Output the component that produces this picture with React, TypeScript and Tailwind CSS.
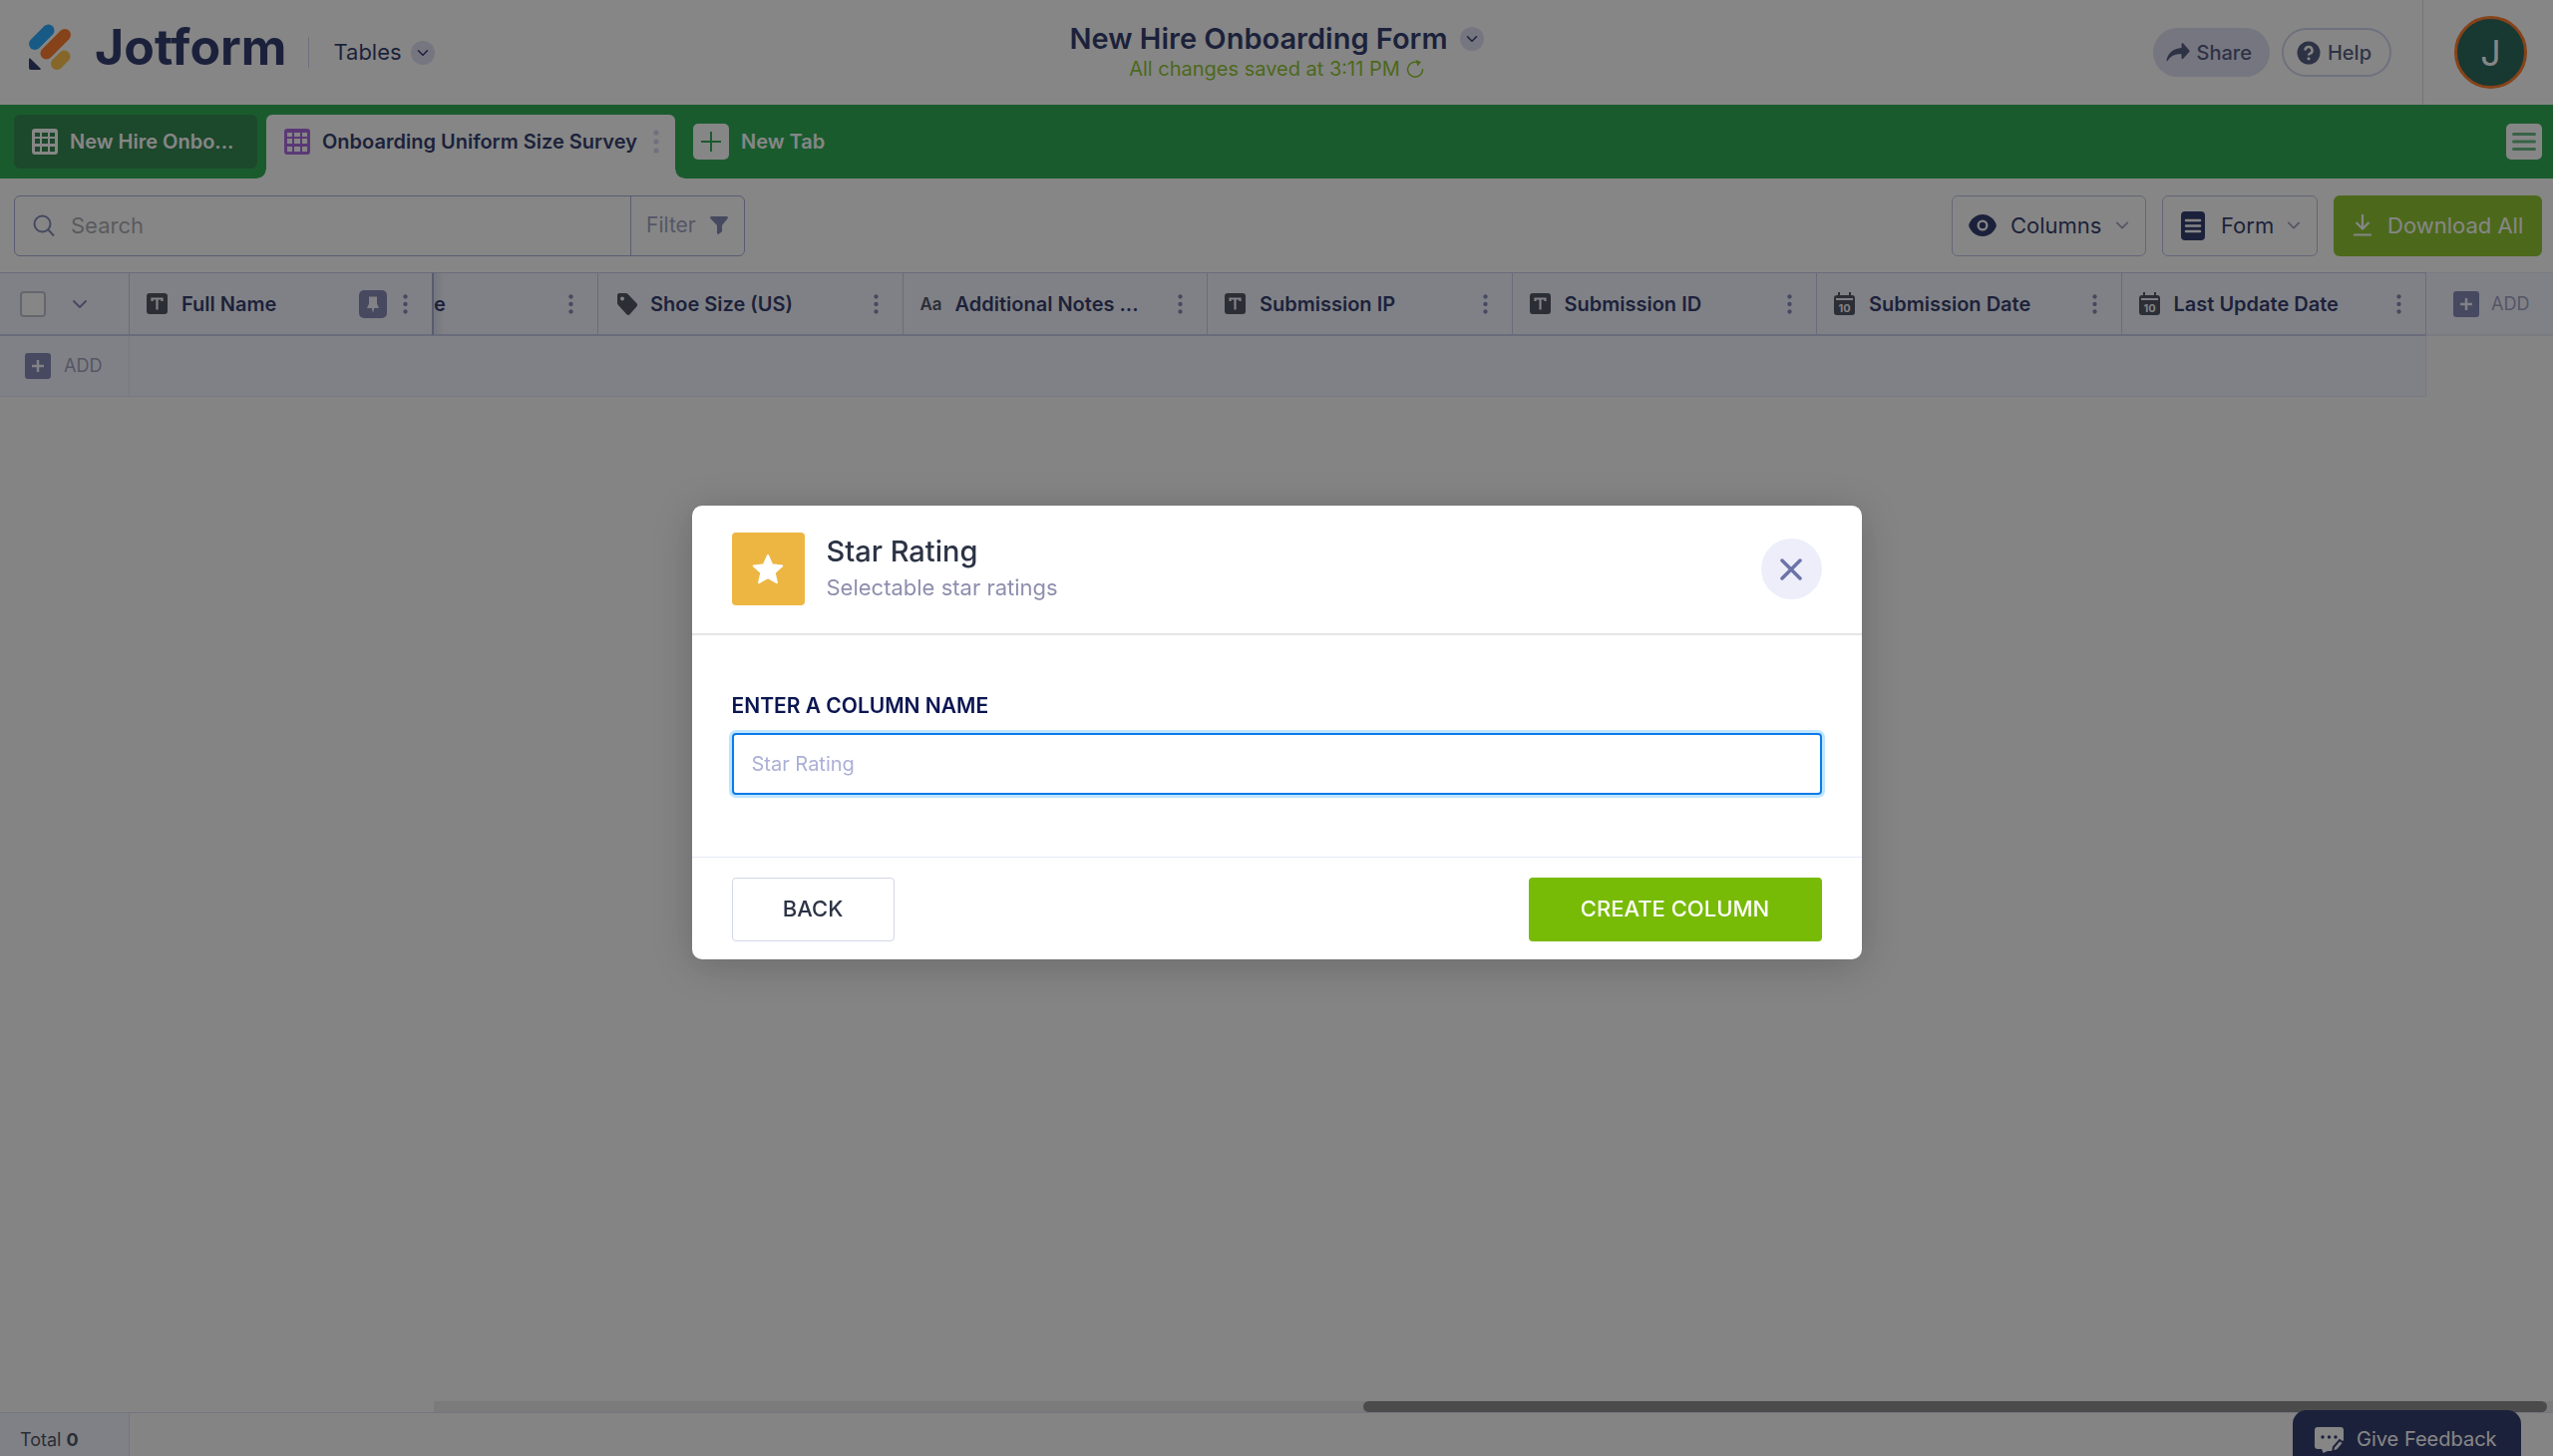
import React, { useState } from 'react';

type ColumnType = 'text' | 'tag' | 'longText' | 'date';

interface Column {
  id: string;
  label: string;
  type: ColumnType;
}

const columns: Column[] = [
  { id: 'shoe', label: 'Shoe Size (US)', type: 'tag' },
  { id: 'notes', label: 'Additional Notes ...', type: 'longText' },
  { id: 'ip', label: 'Submission IP', type: 'text' },
  { id: 'sid', label: 'Submission ID', type: 'text' },
  { id: 'created', label: 'Submission Date', type: 'date' },
  { id: 'updated', label: 'Last Update Date', type: 'date' },
];

const Chevron: React.FC<{ className?: string }> = ({ className }) => (
  <svg viewBox="0 0 16 16" className={className} fill="none" stroke="currentColor" strokeWidth="2" strokeLinecap="round" strokeLinejoin="round" aria-hidden="true">
    <path d="M2 5l6 6 6-6" />
  </svg>
);

const Dots: React.FC<{ className?: string }> = ({ className }) => (
  <svg viewBox="0 0 6 26" className={className} fill="currentColor" aria-hidden="true">
    <circle cx="3" cy="4" r="2.6" />
    <circle cx="3" cy="13" r="2.6" />
    <circle cx="3" cy="22" r="2.6" />
  </svg>
);

const GridIcon: React.FC<{ className?: string }> = ({ className }) => (
  <svg viewBox="0 0 26 26" className={className} fill="currentColor" aria-hidden="true">
    <path
      fillRule="evenodd"
      d="M3 0h20a3 3 0 0 1 3 3v20a3 3 0 0 1-3 3H3a3 3 0 0 1-3-3V3a3 3 0 0 1 3-3ZM3 4v4h5V4ZM10 4v4h6V4ZM18 4v4h5V4ZM3 10v5h5v-5ZM10 10v5h6v-5ZM18 10v5h5v-5ZM3 18v5h5v-5ZM10 18v5h6v-5ZM18 18v5h5v-5Z"
    />
  </svg>
);

const LogoMark = () => (
  <svg viewBox="29 24 42 46" className="h-[46px] w-[42px]" fill="none" strokeWidth="12" strokeLinecap="round" aria-hidden="true">
    <path d="M35 44L48.500 30.500" stroke="#0099ff" />
    <path d="M46.500 53.500L65 35" stroke="#ff6100" />
    <path d="M57 64L64.500 56.500" stroke="#ffb629" />
    <path d="M29 59.500c0-1 1-1.300 1.700-.6l9.800 9.600c.8.700.3 1.500-.6 1.500H31a2 2 0 0 1-2-2Z" fill="#0a1551" />
  </svg>
);

const PlusBox = () => (
  <svg viewBox="0 0 26 26" className="size-[26px] text-[#6c73a8]" aria-hidden="true">
    <rect width="26" height="26" rx="3" fill="currentColor" />
    <path d="M13 7v12M7 13h12" stroke="#f3f3fe" strokeWidth="2.500" />
  </svg>
);

const TypeIcon: React.FC<{ type: ColumnType }> = ({ type }) => {
  if (type === 'longText') {
    return <span className="w-[21px] text-[17px] leading-6 font-semibold">Aa</span>;
  }
  if (type === 'tag') {
    return (
      <svg viewBox="0 0 24 24" className="size-6 shrink-0" fill="currentColor" aria-hidden="true">
        <path fillRule="evenodd" d="M4 1h6.500c.8 0 1.500.3 2 .8l9 9.500c.8.900.8 2.200 0 3l-7 7.900c-.9.900-2.200.9-3.100 0l-8.600-9.500c-.5-.5-.8-1.200-.8-2V3a2 2 0 0 1 2-2ZM7 4.500a2 2 0 1 0 0 4 2 2 0 0 0 0-4Z" />
      </svg>
    );
  }
  if (type === 'date') {
    return (
      <svg viewBox="0 0 21 23" className="h-[23px] w-[21px] shrink-0" fill="currentColor" aria-hidden="true">
        <path d="M4 0h2v3h9V0h2v3h1a3 3 0 0 1 3 3v2h-2V6H2v2H0V6a3 3 0 0 1 3-3h1Z" />
        <path d="M0 8h21v12a3 3 0 0 1-3 3H3a3 3 0 0 1-3-3Z" />
        <text x="10.500" y="20" textAnchor="middle" fontSize="11" fontWeight="700" fill="#f3f3fe">
          10
        </text>
      </svg>
    );
  }
  return (
    <svg viewBox="0 0 21 21" className="size-[21px] shrink-0" aria-hidden="true">
      <rect width="21" height="21" rx="3" fill="currentColor" />
      <path d="M5.500 8V5.500h10V8M10.500 5.500v11" stroke="#f3f3fe" strokeWidth="2.200" fill="none" />
    </svg>
  );
};

const TopBar = () => (
  <header className="grid h-[105px] grid-cols-[1fr_auto_1fr] items-center bg-white">
    <div className="flex items-center pl-[29px]">
      <a href="#home" className="flex items-center gap-6 pb-3 text-[50px] leading-[50px] font-bold">
        <LogoMark />
        Jotform
      </a>
      <span className="ml-[22px] h-[31px] w-px bg-[#c8ceed]" />
      <button className="ml-6 flex items-center gap-[9px] text-[22px]">
        Tables
        <span className="flex size-6 items-center justify-center rounded-full bg-[#d9d9f3]">
          <Chevron className="size-3" />
        </span>
      </button>
    </div>

    <div className="flex flex-col items-center">
      <button className="flex items-center gap-3">
        <h1 className="text-[29px] leading-9 font-semibold">New Hire Onboarding Form</h1>
        <span className="flex size-6 items-center justify-center rounded-full bg-[#d9d9f3]">
          <Chevron className="size-3" />
        </span>
      </button>
      <p className="flex items-center gap-[6px] pb-1 text-[20px] leading-6 text-[#78bb07]">
        All changes saved at 3:11 PM
        <svg viewBox="0 0 18 18" className="size-[18px]" fill="none" stroke="currentColor" strokeWidth="1.500" aria-hidden="true">
          <path d="M16.500 9A7.500 7.500 0 1 1 11 2.500" />
          <path d="M9.500 0l5.500 2-3.500 4.500Z" fill="currentColor" stroke="none" />
        </svg>
      </p>
    </div>

    <div className="flex items-center justify-end self-stretch">
      <button className="flex h-[49px] items-center gap-[7px] rounded-full bg-[#d9d9f3] pr-[18px] pl-[13px] text-[20px] font-medium text-[#343c6a]">
        <svg viewBox="0 0 24 20" className="h-5 w-6" fill="currentColor" aria-hidden="true">
          <path d="M15.500 1.200c0-.9 1-1.400 1.700-.8l5.900 6.800c.6.600.6 1.500 0 2.100l-5.900 6.500c-.6.700-1.700.2-1.700-.7v-3.800C8 11 4.500 13.500 1.800 17.800c-.5.800-1.500.5-1.300-.5C2 10.500 7 5.500 15.500 5Z" />
        </svg>
        Share
      </button>
      <button className="ml-3 flex h-[49px] items-center gap-[7px] rounded-full border-2 border-[#c8ceed] pr-[18px] pl-[13px] text-[20px] font-medium text-[#343c6a]">
        <svg viewBox="0 0 24 24" className="size-6" aria-hidden="true">
          <circle cx="12" cy="12" r="11.500" fill="currentColor" />
          <path d="M8.500 9.500a3.500 3.500 0 1 1 5 3.200c-1 .5-1.500.9-1.500 1.800" fill="none" stroke="white" strokeWidth="2.500" />
          <circle cx="12" cy="17.800" r="1.600" fill="white" />
        </svg>
        Help
      </button>
      <span className="ml-[31px] w-px self-stretch bg-[#d5d7e2]" />
      <button className="mr-[26px] ml-[31px] flex size-[73px] items-center justify-center rounded-full border-[3px] border-[#ff6100] bg-[#004a3d] text-[36px] text-white">
        J
      </button>
    </div>
  </header>
);

const TabBar = () => (
  <nav className="flex h-[74px] items-center bg-[#069c34] pr-[11px] pl-[14px] text-[20px] font-semibold text-white">
    <button className="flex h-[54px] w-[244px] items-center gap-3 rounded-md bg-[#0b6f2e] px-[18px]">
      <GridIcon className="size-[26px]" />
      New Hire Onbo...
    </button>
    <button className="relative ml-[9px] flex h-[64px] w-[410px] items-center gap-3 self-end rounded-t-md bg-white pr-4 pb-[10px] pl-[18px] text-[#0a1551] before:absolute before:bottom-0 before:-left-[9px] before:size-[9px] before:bg-[radial-gradient(circle_at_0_0,transparent_8px,white_9px)] after:absolute after:-right-[9px] after:bottom-0 after:size-[9px] after:bg-[radial-gradient(circle_at_100%_0,transparent_8px,white_9px)]">
      <GridIcon className="size-[26px] text-[#9a4ddb]" />
      Onboarding Uniform Size Survey
      <Dots className="ml-auto h-[26px] w-[6px] text-[#c8ceed]" />
    </button>
    <button className="ml-[18px] flex items-center gap-3">
      <svg viewBox="0 0 36 36" className="size-9" aria-hidden="true">
        <rect width="36" height="36" rx="5" fill="white" />
        <path d="M18 8v20M8 18h20" stroke="#069c34" strokeWidth="2" />
      </svg>
      New Tab
    </button>
    <button aria-label="Menu" className="ml-auto">
      <svg viewBox="0 0 36 36" className="size-9" aria-hidden="true">
        <rect width="36" height="36" rx="5" fill="white" />
        <path d="M7.500 10.500h21M7.500 18h21M7.500 25.500h21" stroke="#4caf6e" strokeWidth="3" strokeLinecap="round" />
      </svg>
    </button>
  </nav>
);

const Toolbar = () => {
  const [search, setSearch] = useState('');

  return (
    <div className="flex h-[94px] items-center gap-4 bg-white pr-[11px] pl-[14px] text-[22px]">
      <div className="flex h-[61px] w-[733px] items-stretch rounded-md border border-[#979dcc]">
        <label htmlFor="search" className="flex items-center pr-4 pl-[18px]">
          <svg viewBox="0 0 22 22" role="img" aria-label="Search" className="size-[22px] text-[#6c73a8]" fill="none" stroke="currentColor" strokeWidth="2">
            <circle cx="9.500" cy="9.500" r="8" />
            <path d="M15.500 15.500l5.500 6" />
          </svg>
        </label>
        <input
          id="search"
          value={search}
          onChange={(e) => setSearch(e.target.value)}
          placeholder="Search"
          className="min-w-0 flex-1 bg-transparent outline-none placeholder:text-[#9a9ba3]"
        />
        <button className="flex w-[114px] items-center justify-between border-l border-[#979dcc] pr-4 pl-[15px] text-[21px] text-[#8d91b5]">
          Filter
          <svg viewBox="0 0 18 18" className="size-[18px] text-[#6c73a8]" fill="currentColor" aria-hidden="true">
            <path d="M1.500 0h15c1.300 0 1.800 1.300 1 2.300L12 9v5.500c0 .5-.2.900-.6 1.200l-2.800 2c-.7.500-1.600 0-1.600-.9V9L.5 2.300C-.3 1.300.2 0 1.500 0Z" />
          </svg>
        </button>
      </div>

      <button className="ml-auto flex h-[61px] w-[195px] items-center rounded-md border border-[#aeb4de] pl-4">
        <svg viewBox="0 0 28 22" className="h-[22px] w-7" aria-hidden="true">
          <path d="M14 0C7.500 0 2.500 4.500.4 9.800c-.3.800-.3 1.600 0 2.400C2.500 17.500 7.500 22 14 22s11.500-4.500 13.600-9.800c.3-.8.3-1.600 0-2.400C25.500 4.500 20.500 0 14 0Z" fill="currentColor" />
          <circle cx="14" cy="11" r="5.500" fill="white" />
          <circle cx="14" cy="11" r="3.200" fill="currentColor" />
        </svg>
        <span className="ml-[14px]">Columns</span>
        <Chevron className="mr-4 ml-auto size-[14px] text-[#8d91b5]" />
      </button>
      <button className="flex h-[61px] w-[156px] items-center rounded-md border border-[#aeb4de] pl-[18px]">
        <svg viewBox="0 0 24 29" className="h-[29px] w-6" aria-hidden="true">
          <rect width="24" height="29" rx="4" fill="currentColor" />
          <path d="M5 9h14M5 14.500h14M5 20h14" stroke="white" strokeWidth="2.500" strokeLinecap="round" />
        </svg>
        <span className="ml-4">Form</span>
        <Chevron className="mr-4 ml-auto size-[14px] text-[#8d91b5]" />
      </button>
      <button className="flex h-[61px] w-[209px] items-center gap-4 rounded-md bg-[#78bb07] pl-5 text-white">
        <svg viewBox="0 0 18 22" className="h-[22px] w-[18px] shrink-0" fill="none" stroke="currentColor" strokeWidth="2.200" aria-hidden="true">
          <path d="M9 0v14M2.500 8L9 14.500 15.500 8M0 20.500h18" />
        </svg>
        Download All
      </button>
    </div>
  );
};

const DataTable = () => (
  <table className="w-full table-fixed border-separate border-spacing-0 text-[20px] leading-6">
    <colgroup>
      <col className="w-[130px]" />
      <col className="w-[305px]" />
      <col className="w-[165px]" />
      {columns.map((column) => (
        <col key={column.id} />
      ))}
      <col className="w-[127px]" />
    </colgroup>
    <thead>
      <tr className="bg-[#f2f4fe] text-left text-[#0a1551]">
        <th className="h-[64px] border-t border-r border-b-2 border-[#bcc2e6] p-0 font-semibold">
          <div className="flex items-center gap-[26px] pl-5">
            <input type="checkbox" aria-label="Select all rows" className="size-[26px] appearance-none rounded border-2 border-[#b3b5c6] bg-white" />
            <Chevron className="size-4 text-[#6c73a8]" />
          </div>
        </th>
        <th className="border-t border-r-2 border-b-2 border-[#bcc2e6] border-r-[#979dcc] p-0 font-semibold">
          <div className="flex items-center pr-6 pl-[17px]">
            <span className="text-[#2c3345]">
              <TypeIcon type="text" />
            </span>
            <span className="ml-[14px]">Full Name</span>
            <svg viewBox="0 0 28 28" className="ml-auto size-7" aria-hidden="true">
              <rect width="28" height="28" rx="5" fill="#6c73a8" />
              <path d="M10 6.500h8v7l2 4.500h-4.800L14 23l-1.200-5H8l2-4.500Z" fill="#f3f3fe" />
            </svg>
            <Dots className="ml-4 h-[22px] w-[5px] text-[#6c73a8]" />
          </div>
        </th>
        <th className="border-t border-r border-b-2 border-[#bcc2e6] p-0 font-semibold shadow-[inset_12px_0_10px_-8px_#d0d4ea]">
          <div className="flex items-center justify-between pr-6">
            <span>e</span>
            <Dots className="h-[22px] w-[5px] text-[#6c73a8]" />
          </div>
        </th>
        {columns.map((column) => (
          <th key={column.id} className="border-t border-r border-b-2 border-[#bcc2e6] p-0 font-semibold">
            <div className="flex items-center pr-6 pl-[17px]">
              <span className="flex w-[35px] shrink-0 text-[#2c3345]">
                <TypeIcon type={column.type} />
              </span>
              <span className="truncate">{column.label}</span>
              <Dots className="ml-auto h-[22px] w-[5px] shrink-0 text-[#6c73a8]" />
            </div>
          </th>
        ))}
        <th className="border-t border-b-2 border-[#e3e5f5] p-0 font-normal">
          <button className="flex items-center gap-3 pl-[27px] text-[18px] text-[#8d91b5]">
            <PlusBox />
            ADD
          </button>
        </th>
      </tr>
    </thead>
    <tbody>
      <tr>
        <td className="h-[61px] border-r border-b border-[#dfe2f3] bg-[#f2f4fe] p-0">
          <button className="flex items-center gap-[13px] pl-[25px] text-[18px] text-[#8d91b5]">
            <PlusBox />
            ADD
          </button>
        </td>
        <td colSpan={8} className="border-r border-b border-[#dfe2f3] bg-[#f2f4fe] p-0" />
        <td className="p-0" />
      </tr>
    </tbody>
  </table>
);

const BottomBar = () => (
  <footer className="mt-auto">
    <div className="ml-[435px] flex h-[11px] justify-end bg-[#e6e6e6] pr-[6px]">
      <div className="w-[56%] rounded-full bg-[#777777]" />
    </div>
    <div className="flex h-[44px] border-t border-[#d5d8ee]">
      <div className="w-[130px] border-r border-[#d5d8ee] bg-[#f2f4fe] pt-[15px] pl-5 text-[18px] leading-6 text-[#2c3345]">
        Total <b>0</b>
      </div>
    </div>
    <button className="fixed right-8 bottom-0 flex h-[46px] w-[229px] items-center gap-[12px] rounded-t-[14px] bg-[#0a1551] pt-3 pl-[22px] text-[20px] text-white">
      <svg viewBox="0 0 30 27" className="h-[27px] w-[30px] shrink-0" aria-hidden="true">
        <path d="M3 1h23a3 3 0 0 1 3 3v10l-9 11h-7l-4.500 2-1.500-4H3a3 3 0 0 1-3-3V4a3 3 0 0 1 3-3Z" fill="white" />
        <circle cx="8" cy="11" r="1.700" fill="#0a1551" />
        <circle cx="14.500" cy="11" r="1.700" fill="#0a1551" />
        <circle cx="21" cy="11" r="1.700" fill="#0a1551" />
        <path d="M18 26l1-5 6-7 4 3-6 7Z" fill="white" stroke="#0a1551" strokeWidth="2" />
      </svg>
      Give Feedback
    </button>
  </footer>
);

const ColumnNameDialog = () => {
  const [name, setName] = useState('');

  return (
    <div className="fixed inset-0 flex items-center justify-center bg-[#2a2a2a]/57 pt-2">
      <form
        role="dialog"
        aria-labelledby="dialog-title"
        onSubmit={(e) => e.preventDefault()}
        className="w-[1173px] max-w-full rounded-[10px] bg-white text-[#2c3345] shadow-[0_6px_40px_rgba(0,0,0,0.2)]"
      >
        <div className="flex h-[130px] items-center border-b-2 border-[#e5e5e8] px-10">
          <span className="flex size-[73px] items-center justify-center rounded bg-[#edb642] text-white">
            <svg viewBox="0 0 32 31" className="h-[31px] w-8" fill="currentColor" stroke="currentColor" strokeWidth="2" strokeLinejoin="round" aria-hidden="true">
              <path d="M16 2l4.200 9.300 10 1.100-7.500 6.800 2.200 10L16 24.200l-8.900 5 2.200-10-7.500-6.800 10-1.100Z" />
            </svg>
          </span>
          <div className="ml-[22px]">
            <h2 id="dialog-title" className="text-[29px] leading-9 font-medium">
              Star Rating
            </h2>
            <p className="text-[22px] leading-9 text-[#8d8fae]">Selectable star ratings</p>
          </div>
          <button type="button" aria-label="Close" className="ml-auto flex size-[61px] items-center justify-center rounded-full bg-[#edeefa] text-[#6c73a8]">
            <svg viewBox="0 0 22 22" className="size-[22px]" fill="none" stroke="currentColor" strokeWidth="3.500" strokeLinecap="round" aria-hidden="true">
              <path d="M2 2l18 18M20 2L2 20" />
            </svg>
          </button>
        </div>

        <div className="px-10 pt-[59px] pb-[62px]">
          <label htmlFor="column-name" className="block pb-[15px] text-[21px] leading-6 font-semibold text-[#0a1551]">
            ENTER A COLUMN NAME
          </label>
          <input
            id="column-name"
            value={name}
            onChange={(e) => setName(e.target.value)}
            placeholder="Star Rating"
            className="block h-[62px] w-full rounded border-2 border-[#0a7be8] px-[18px] text-[20px] ring-3 ring-[#c0e6ff] outline-none placeholder:text-[#abb0d6]"
          />
        </div>

        <div className="flex justify-between border-t border-[#e6e8f6] px-10 pt-5 pb-[18px] text-[22px] font-medium">
          <button type="button" className="h-16 w-[163px] rounded border border-[#d3d6e6]">
            BACK
          </button>
          <button type="submit" className="h-16 w-[294px] rounded bg-[#78bb07] text-white">
            CREATE COLUMN
          </button>
        </div>
      </form>
    </div>
  );
};

export default function App() {
  return (
    <div className="flex min-h-screen flex-col bg-[#fafafc] font-['Inter',sans-serif] text-[#0a1551]">
      <TopBar />
      <TabBar />
      <Toolbar />
      <DataTable />
      <BottomBar />
      <ColumnNameDialog />
    </div>
  );
}
